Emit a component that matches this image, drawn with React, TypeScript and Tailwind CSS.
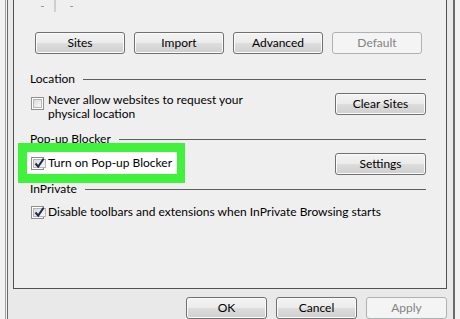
import React from 'react';

const FONT = "font-['Lato','Open_Sans',sans-serif]";

const BTN =
  'h-[22px] rounded-[3px] border border-[#707070] bg-[linear-gradient(#f3f3f3_0%,#ebebeb_50%,#dddddd_51%,#cfcfcf_100%)] shadow-[inset_0_0_0_1px_#fbfbfb] text-black flex items-center justify-center text-[12px]';
const BTN_OFF =
  'h-[22px] rounded-[3px] border border-[#adb2b5] bg-[#f4f4f4] text-[#838383] flex items-center justify-center text-[12px]';

function CheckBox({ checked = false }: { checked?: boolean }) {
  return (
    <span className="w-[13px] h-[13px] shrink-0 border border-[#8e8f8f] bg-white p-px flex">
      <span className="flex-1 flex items-center justify-center bg-[linear-gradient(135deg,#dcdcdc,#f7f7f7)] border border-[#b5b5b5]">
        {checked && (
          <svg width="11" height="11" viewBox="0 0 11 11" className="overflow-visible">
            <path d="M1.5 5.5 L4.2 8.6 L9.6 0.8" fill="none" stroke="#1b2a4e" strokeWidth="2" />
          </svg>
        )}
      </span>
    </span>
  );
}

function SectionHeader({ label }: { label: string }) {
  return (
    <div className="h-[14px] flex items-center gap-[8px]">
      <span className="leading-[14px]">{label}</span>
      <span className="flex-1 h-px bg-[#5f5f5f]" />
    </div>
  );
}

export default function App() {
  return (
    <div className={`w-[460px] h-[319px] overflow-hidden bg-[#f2f2f2] text-[12px] text-black ${FONT}`}>
      <div className="h-full ml-[5px] mr-[5px] border-l border-[#a3a3a3] pl-px">
        <div className="h-full border-l border-r-2 border-[#6a6a6a] bg-[#e9e9e9] pl-[5px] pr-[6px] flex flex-col">
          {/* tab page */}
          <div className="h-[298px] border-l border-r border-b border-[#505050] bg-[#efefef] pl-[16px] pr-[20px] flex flex-col">
            {/* remains of the zone slider */}
            <div className="h-[32px] flex items-start">
              <span className="ml-[11px] mt-[6px] w-[3px] h-px bg-[#9a9a9a]" />
              <span className="ml-[10px] w-[2px] h-[12px] bg-[#cfcfcf]" />
              <span className="ml-[14px] mt-[6px] w-[3px] h-px bg-[#9a9a9a]" />
            </div>

            <div className="ml-[5px] flex gap-[9px]">
              <button className={`${BTN} w-[90px]`}>Sites</button>
              <button className={`${BTN} w-[90px]`}>Import</button>
              <button className={`${BTN} w-[90px]`}>Advanced</button>
              <button className={`${BTN_OFF} w-[90px]`}>Default</button>
            </div>

            <div className="mt-[18px]">
              <SectionHeader label="Location" />
            </div>
            <div className="mt-[7px] flex items-start justify-between">
              <div className="flex items-start gap-[4px] pl-px">
                <span className="mt-[4px]">
                  <CheckBox />
                </span>
                <span className="leading-[14px]">
                  Never allow websites to request your
                  <br />
                  physical location
                </span>
              </div>
              <button className={`${BTN} w-[91px]`}>Clear Sites</button>
            </div>

            <div className="mt-[11px]">
              <SectionHeader label="Pop-up Blocker" />
            </div>
            <div className="mt-[-3px] h-[40px] flex items-center justify-between">
              <div className="ml-[-12px] border-[9px] border-r-[8px] border-[#41f23c] bg-white pl-[4px] pr-[5px] h-[40px] flex items-center gap-[4px]">
                <CheckBox checked />
                <span className="leading-[14px]">Turn on Pop-up Blocker</span>
              </div>
              <button className={`${BTN} w-[91px] mt-[2px]`}>Settings</button>
            </div>

            <div className="mt-[-1px]">
              <SectionHeader label="InPrivate" />
            </div>
            <div className="mt-[9px] h-[14px] flex items-center gap-[4px] pl-px">
              <CheckBox checked />
              <span className="leading-[14px]">Disable toolbars and extensions when InPrivate Browsing starts</span>
            </div>
            <div className="flex-1" />
          </div>

          {/* dialog buttons */}
          <div className="mt-[8px] flex justify-end gap-[9px]">
            <button className={`${BTN} w-[81px] border-[#2c6a9c] shadow-[inset_0_0_0_1px_#bfe3f7]`}>OK</button>
            <button className={`${BTN} w-[81px]`}>Cancel</button>
            <button className={`${BTN_OFF} w-[81px]`}>Apply</button>
          </div>
        </div>
      </div>
    </div>
  );
}
